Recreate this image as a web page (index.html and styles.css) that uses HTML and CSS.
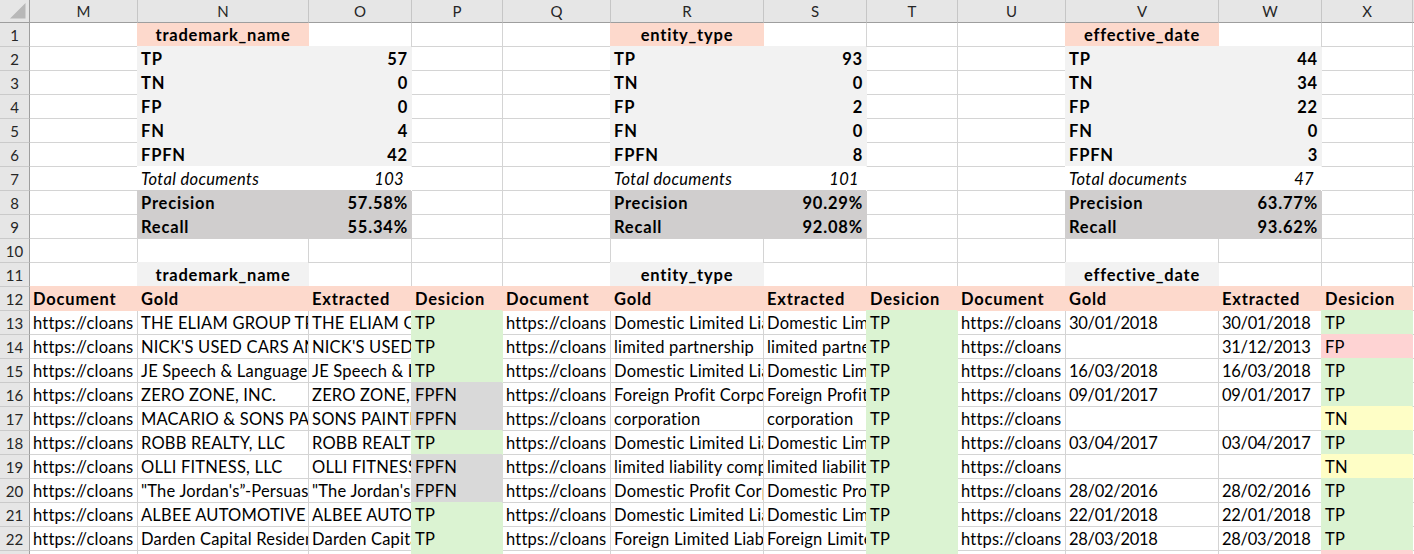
FILE: index.html
```html
<!DOCTYPE html>
<html lang="en">
<head>
<meta charset="utf-8">
<title>Sheet</title>
<link rel="stylesheet" href="styles.css">
</head>
<body>
<table class="sheet">
<colgroup>
<col class="w-rh"><col class="w-doc"><col class="w-gold1"><col class="w-ext"><col class="w-dec">
<col class="w-doc"><col class="w-gold"><col class="w-ext"><col class="w-dec">
<col class="w-doc"><col class="w-gold"><col class="w-ext"><col class="w-dec"><col class="w-rest">
</colgroup>
<thead>
<tr>
<th class="corner"><svg class="tri" width="16" height="16" viewBox="0 0 16 16"><polygon points="15.5,0 15.5,15.5 0,15.5" fill="#b8b8b8"/></svg></th>
<th class="ch">M</th><th class="ch">N</th><th class="ch">O</th><th class="ch">P</th><th class="ch">Q</th><th class="ch">R</th><th class="ch">S</th><th class="ch">T</th><th class="ch">U</th><th class="ch">V</th><th class="ch">W</th><th class="ch">X</th><th class="ch"></th>
</tr>
</thead>
<tbody>
<tr><th class="rh">1</th><td></td><td class="sal nt b c">trademark_name</td><td></td><td></td><td></td><td class="sal nt b c">entity_type</td><td></td><td></td><td></td><td class="sal nt b c">effective_date</td><td></td><td></td><td></td></tr>
<tr><th class="rh">2</th><td></td><td class="lg b">TP</td><td class="lg b r">57</td><td></td><td></td><td class="lg b">TP</td><td class="lg b r">93</td><td></td><td></td><td class="lg b">TP</td><td class="lg b r">44</td><td></td><td></td></tr>
<tr><th class="rh">3</th><td></td><td class="lg b">TN</td><td class="lg b r">0</td><td></td><td></td><td class="lg b">TN</td><td class="lg b r">0</td><td></td><td></td><td class="lg b">TN</td><td class="lg b r">34</td><td></td><td></td></tr>
<tr><th class="rh">4</th><td></td><td class="lg b">FP</td><td class="lg b r">0</td><td></td><td></td><td class="lg b">FP</td><td class="lg b r">2</td><td></td><td></td><td class="lg b">FP</td><td class="lg b r">22</td><td></td><td></td></tr>
<tr><th class="rh">5</th><td></td><td class="lg b">FN</td><td class="lg b r">4</td><td></td><td></td><td class="lg b">FN</td><td class="lg b r">0</td><td></td><td></td><td class="lg b">FN</td><td class="lg b r">0</td><td></td><td></td></tr>
<tr><th class="rh">6</th><td></td><td class="lg b">FPFN</td><td class="lg b r">42</td><td></td><td></td><td class="lg b">FPFN</td><td class="lg b r">8</td><td></td><td></td><td class="lg b">FPFN</td><td class="lg b r">3</td><td></td><td></td></tr>
<tr><th class="rh">7</th><td></td><td class="wf i">Total documents</td><td class="wf i r ri">103</td><td></td><td></td><td class="wf i">Total documents</td><td class="wf i r ri">101</td><td></td><td></td><td class="wf i">Total documents</td><td class="wf i r ri">47</td><td></td><td></td></tr>
<tr><th class="rh">8</th><td></td><td class="pr b">Precision</td><td class="pr b r">57.58%</td><td></td><td></td><td class="pr b">Precision</td><td class="pr b r">90.29%</td><td></td><td></td><td class="pr b">Precision</td><td class="pr b r">63.77%</td><td></td><td></td></tr>
<tr><th class="rh">9</th><td></td><td class="pr b">Recall</td><td class="pr b r">55.34%</td><td></td><td></td><td class="pr b">Recall</td><td class="pr b r">92.08%</td><td></td><td></td><td class="pr b">Recall</td><td class="pr b r">93.62%</td><td></td><td></td></tr>
<tr><th class="rh">10</th><td></td><td></td><td></td><td></td><td></td><td></td><td></td><td></td><td></td><td></td><td></td><td></td><td></td></tr>
<tr><th class="rh">11</th><td></td><td class="lg b c">trademark_name</td><td></td><td></td><td></td><td class="lg b c">entity_type</td><td></td><td></td><td></td><td class="lg b c">effective_date</td><td></td><td></td><td></td></tr>
<tr><th class="rh">12</th><td class="sal nl b">Document</td><td class="sal b">Gold</td><td class="sal b">Extracted</td><td class="sal b">Desicion</td><td class="sal b">Document</td><td class="sal b">Gold</td><td class="sal b">Extracted</td><td class="sal b">Desicion</td><td class="sal b">Document</td><td class="sal b">Gold</td><td class="sal b">Extracted</td><td class="sal b">Desicion</td><td></td></tr>
<tr><th class="rh">13</th><td>https://cloans</td><td>THE ELIAM GROUP TRA</td><td>THE ELIAM GR</td><td class="g">TP</td><td>https://cloans</td><td>Domestic Limited Liability Company</td><td>Domestic Limited Liability Company</td><td class="g">TP</td><td>https://cloans</td><td class="d">30/01/2018</td><td class="d">30/01/2018</td><td class="g">TP</td><td></td></tr>
<tr><th class="rh">14</th><td>https://cloans</td><td>NICK'S USED CARS AND</td><td>NICK'S USED C</td><td class="g">TP</td><td>https://cloans</td><td>limited partnership</td><td>limited partnership</td><td class="g">TP</td><td>https://cloans</td><td></td><td class="d">31/12/2013</td><td class="p">FP</td><td></td></tr>
<tr><th class="rh">15</th><td>https://cloans</td><td>JE Speech &amp; Language T</td><td>JE Speech &amp; L</td><td class="g">TP</td><td>https://cloans</td><td>Domestic Limited Liability Company</td><td>Domestic Limited Liability Company</td><td class="g">TP</td><td>https://cloans</td><td class="d">16/03/2018</td><td class="d">16/03/2018</td><td class="g">TP</td><td></td></tr>
<tr><th class="rh">16</th><td>https://cloans</td><td>ZERO ZONE, INC.</td><td>ZERO ZONE, INC.</td><td class="x">FPFN</td><td>https://cloans</td><td>Foreign Profit Corporation</td><td>Foreign Profit Corporation</td><td class="g">TP</td><td>https://cloans</td><td class="d">09/01/2017</td><td class="d">09/01/2017</td><td class="g">TP</td><td></td></tr>
<tr><th class="rh">17</th><td>https://cloans</td><td>MACARIO &amp; SONS PAIN</td><td>SONS PAINTN</td><td class="x">FPFN</td><td>https://cloans</td><td>corporation</td><td>corporation</td><td class="g">TP</td><td>https://cloans</td><td></td><td></td><td class="y">TN</td><td></td></tr>
<tr><th class="rh">18</th><td>https://cloans</td><td>ROBB REALTY, LLC</td><td>ROBB REALTY, LLC</td><td class="g">TP</td><td>https://cloans</td><td>Domestic Limited Liability Company</td><td>Domestic Limited Liability Company</td><td class="g">TP</td><td>https://cloans</td><td class="d">03/04/2017</td><td class="d">03/04/2017</td><td class="g">TP</td><td></td></tr>
<tr><th class="rh">19</th><td>https://cloans</td><td>OLLI FITNESS, LLC</td><td>OLLI FITNESS.</td><td class="x">FPFN</td><td>https://cloans</td><td>limited liability company</td><td>limited liability company</td><td class="g">TP</td><td>https://cloans</td><td></td><td></td><td class="y">TN</td><td></td></tr>
<tr><th class="rh">20</th><td>https://cloans</td><td>"The Jordan's”-Persuas</td><td>"The Jordan's</td><td class="x">FPFN</td><td>https://cloans</td><td>Domestic Profit Corporation</td><td>Domestic Profit Corporation</td><td class="g">TP</td><td>https://cloans</td><td class="d">28/02/2016</td><td class="d">28/02/2016</td><td class="g">TP</td><td></td></tr>
<tr><th class="rh">21</th><td>https://cloans</td><td>ALBEE AUTOMOTIVE S</td><td>ALBEE AUTOM</td><td class="g">TP</td><td>https://cloans</td><td>Domestic Limited Liability Company</td><td>Domestic Limited Liability Company</td><td class="g">TP</td><td>https://cloans</td><td class="d">22/01/2018</td><td class="d">22/01/2018</td><td class="g">TP</td><td></td></tr>
<tr><th class="rh">22</th><td>https://cloans</td><td>Darden Capital Residen</td><td>Darden Capita</td><td class="g">TP</td><td>https://cloans</td><td>Foreign Limited Liability Company</td><td>Foreign Limited Liability Company</td><td class="g">TP</td><td>https://cloans</td><td class="d">28/03/2018</td><td class="d">28/03/2018</td><td class="g">TP</td><td></td></tr>
<tr><th class="rh">23</th><td></td><td></td><td></td><td class="g"></td><td></td><td></td><td></td><td class="g"></td><td></td><td></td><td></td><td class="p"></td><td></td></tr>
</tbody>
</table>
</body>
</html>
```
FILE: styles.css
```css
html, body {
  margin: 0;
  padding: 0;
  overflow: hidden;
  background: #ffffff;
}

.sheet {
  border-collapse: separate;
  border-spacing: 0;
  table-layout: fixed;
  width: 1513px;
  font-family: Lato, "Noto Sans", sans-serif;
  font-size: 16.5px;
  letter-spacing: 0.2px;
  color: #000000;
}

.w-rh { width: 30px; }
.w-doc { width: 108px; }
.w-gold1 { width: 171px; }
.w-gold { width: 153px; }
.w-ext { width: 103px; }
.w-dec { width: 91px; }
.w-rest { width: 100px; }

.sheet tbody tr { height: 24px; }
.sheet thead tr { height: 23px; }

.sheet td,
.sheet th {
  box-sizing: border-box;
  padding: 0 3px;
  border-right: 1px solid #d4d4d4;
  border-bottom: 1px solid #d4d4d4;
  white-space: nowrap;
  overflow: hidden;
  vertical-align: bottom;
  line-height: 21px;
  text-align: left;
  font-weight: normal;
}

/* headers */
.sheet th.ch {
  background: #e6e6e6;
  border-right-color: #c6c6c6;
  border-bottom-color: #9e9e9e;
  text-align: center;
  font-size: 15px;
  letter-spacing: 0;
  color: #262626;
  line-height: 20px;
  padding-bottom: 1px;
}

.sheet th.corner {
  background: #e6e6e6;
  border-right-color: #9e9e9e;
  border-bottom-color: #9e9e9e;
  padding: 3px 0 0 10px;
  vertical-align: top;
  line-height: 0;
}

.tri { display: block; }

.sheet th.rh {
  background: #e6e6e6;
  border-right-color: #9e9e9e;
  border-bottom-color: #cacaca;
  text-align: center;
  font-size: 15px;
  letter-spacing: 0;
  color: #262626;
  line-height: 20px;
  padding: 0 0 1px 0;
}

/* text styles */
.b { font-weight: 700 !important; letter-spacing: 0.8px; }
.i { font-style: italic; letter-spacing: 0.35px; }
.c { text-align: center !important; }
.r { text-align: right !important; }
.ri { padding-right: 7px !important; }
.d { letter-spacing: -0.3px; }

/* fills: cover surrounding gridlines like a spreadsheet fill */
.sheet td.sal { background: #fdd9cc; border-color: #fdd9cc; box-shadow: -1px -1px 0 0 #fdd9cc; }
.sheet td.lg { background: #f2f2f2; border-color: #f2f2f2; box-shadow: -1px -1px 0 0 #f2f2f2; }
.sheet td.pr { background: #d0cece; border-color: #d0cece; box-shadow: -1px -1px 0 0 #d0cece; }
.sheet td.wf { background: #ffffff; border-color: #ffffff; box-shadow: -1px -1px 0 0 #ffffff; }
.sheet td.g { background: #dbf3d2; border-color: #dbf3d2; box-shadow: -1px -1px 0 0 #dbf3d2; }
.sheet td.x { background: #d9d9d9; border-color: #d9d9d9; box-shadow: -1px -1px 0 0 #d9d9d9; }
.sheet td.p { background: #fed3d3; border-color: #fed3d3; box-shadow: -1px -1px 0 0 #fed3d3; }
.sheet td.y { background: #fefec6; border-color: #fefec6; box-shadow: -1px -1px 0 0 #fefec6; }

.sheet td.sal.nt { box-shadow: -1px 0 0 0 #fdd9cc; }
.sheet td.sal.nl { box-shadow: 0 -1px 0 0 #fdd9cc; }
```
